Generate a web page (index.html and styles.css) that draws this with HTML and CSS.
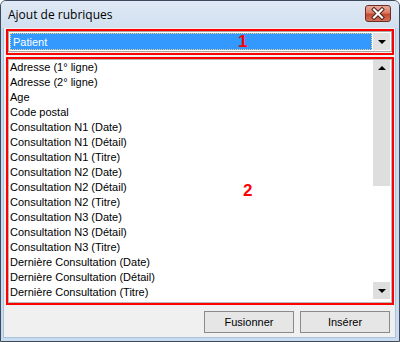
FILE: index.html
```html
<!DOCTYPE html>
<html lang="fr">
<head>
    <meta charset="UTF-8">
    <title>Ajout de rubriques</title>
    <link rel="stylesheet" href="styles.css">
</head>
<body>
    <div class="window">
        <div class="titlebar">
            <span class="title">Ajout de rubriques</span>
            <div class="close">
                <svg width="26" height="17" viewBox="0 0 26 17">
                    <path d="M9 4.5 L17 12.5 M17 4.5 L9 12.5" stroke="#4a1a12" stroke-width="4" stroke-linecap="square"/>
                    <path d="M9 4.5 L17 12.5 M17 4.5 L9 12.5" stroke="#fff" stroke-width="2.2" stroke-linecap="square"/>
                </svg>
            </div>
        </div>
        <div class="client">
            <div class="zone zone-combo">
                <div class="combo">
                    <div class="combo-value"><span>Patient</span></div>
                    <div class="combo-btn"><span class="tri-down"></span></div>
                </div>
                <span class="mark mark-1">1</span>
            </div>
            <div class="zone zone-list">
                <div class="listbox">
                    <ul class="items">
                        <li>Adresse (1° ligne)</li>
                        <li>Adresse (2° ligne)</li>
                        <li>Age</li>
                        <li>Code postal</li>
                        <li>Consultation N1 (Date)</li>
                        <li>Consultation N1 (Détail)</li>
                        <li>Consultation N1 (Titre)</li>
                        <li>Consultation N2 (Date)</li>
                        <li>Consultation N2 (Détail)</li>
                        <li>Consultation N2 (Titre)</li>
                        <li>Consultation N3 (Date)</li>
                        <li>Consultation N3 (Détail)</li>
                        <li>Consultation N3 (Titre)</li>
                        <li>Dernière Consultation (Date)</li>
                        <li>Dernière Consultation (Détail)</li>
                        <li>Dernière Consultation (Titre)</li>
                    </ul>
                    <div class="scrollbar">
                        <div class="thumb"><span class="tri-up"></span></div>
                        <div class="track"></div>
                        <div class="sb-btn"><span class="tri-down"></span></div>
                    </div>
                </div>
                <span class="mark mark-2">2</span>
            </div>
            <div class="buttons">
                <button class="btn">Fusionner</button>
                <button class="btn">Insérer</button>
            </div>
        </div>
    </div>
</body>
</html>
```

FILE: styles.css
```css
html, body {
    margin: 0;
    padding: 0;
    background: #fff;
}
.window {
    width: 400px;
    height: 342px;
    box-sizing: border-box;
    border: 1px solid #3c4a5c;
    border-radius: 6px 6px 0 0;
    background: #c9dbee;
    display: flex;
    flex-direction: column;
}
.titlebar {
    height: 27px;
    display: flex;
    align-items: center;
    justify-content: space-between;
    padding: 0 8px 0 7px;
    background: linear-gradient(#dfe9f5, #d2e0ef);
    border-radius: 5px 5px 0 0;
}
.title {
    font-family: "Open Sans", sans-serif;
    font-size: 12px;
    color: #000;
    margin-top: 0px;
}
.close {
    width: 26px;
    height: 17px;
    margin-top: -2px;
    box-sizing: border-box;
    border: 1px solid #6e2d24;
    border-radius: 3px;
    background: linear-gradient(#e9a999 0%, #dc7f6a 45%, #c24a30 55%, #d3735a 100%);
    display: flex;
}
.close svg {
    margin: -1px;
}
.client {
    flex: 1;
    margin: 0 3px 3px 2px;
    background: #f0f0f0;
    padding: 1px 1px 0 2px;
    display: flex;
    flex-direction: column;
    font-family: "Liberation Sans", Arial, sans-serif;
    font-size: 11px;
    border-left: 1px solid #a9c3df;
    border-right: 1px solid #a9c3df;
    border-bottom: 1px solid #a9c3df;
}
.zone {
    position: relative;
    border: 2px solid #ff0000;
}
.zone-combo {
    height: 22px;
    padding: 0;
}
.combo {
    height: 21px;
    box-sizing: border-box;
    border: 1px solid #a6a6a6;
    background: #fff;
    display: flex;
    padding: 1px 1px 1px 1px;
}
.combo-value {
    flex: 1;
    background: #3399ff;
    border: 1px dotted #f0d28a;
    color: #fff;
    display: flex;
    align-items: center;
    padding-left: 2px;
}
.combo-btn {
    width: 17px;
    background: #e1e1e1;
    margin-left: 1px;
    display: flex;
    align-items: center;
    justify-content: center;
}
.tri-down {
    width: 0;
    height: 0;
    border-left: 4px solid transparent;
    border-right: 4px solid transparent;
    border-top: 4px solid #000;
}
.tri-up {
    width: 0;
    height: 0;
    border-left: 4px solid transparent;
    border-right: 4px solid transparent;
    border-bottom: 4px solid #000;
}
.mark {
    position: absolute;
    color: #ff0000;
    font-family: "Liberation Sans", Arial, sans-serif;
    font-weight: bold;
    font-size: 17px;
}
.mark-1 {
    left: 230px;
    top: 1px;
}
.mark-2 {
    left: 235px;
    top: 122px;
}
.zone-list {
    margin-top: 2px;
    height: 244px;
}
.listbox {
    height: 100%;
    box-sizing: border-box;
    border: 1px solid #b8b8b8;
    background: #fff;
    display: flex;
}
.items {
    flex: 1;
    list-style: none;
    margin: 0;
    padding: 0 0 0 1px;
}
.items li {
    height: 15px;
    line-height: 15px;
    color: #000;
    white-space: nowrap;
}
.scrollbar {
    width: 17px;
    display: flex;
    flex-direction: column;
    margin-right: 1px;
}
.thumb {
    height: 126px;
    background: #dedede;
    display: flex;
    justify-content: center;
    padding-top: 6px;
    box-sizing: border-box;
}
.track {
    flex: 1;
    background: #fff;
}
.sb-btn {
    height: 17px;
    background: #dedede;
    display: flex;
    align-items: center;
    justify-content: center;
    margin-bottom: 3px;
}
.buttons {
    display: flex;
    justify-content: flex-end;
    gap: 6px;
    margin-top: 6px;
    padding-right: 4px;
}
.btn {
    width: 90px;
    height: 22px;
    border: 1px solid #8a8a8a;
    background: #e6e6e6;
    font-family: "Liberation Sans", Arial, sans-serif;
    font-size: 11px;
    color: #000;
    padding: 0;
}
```
